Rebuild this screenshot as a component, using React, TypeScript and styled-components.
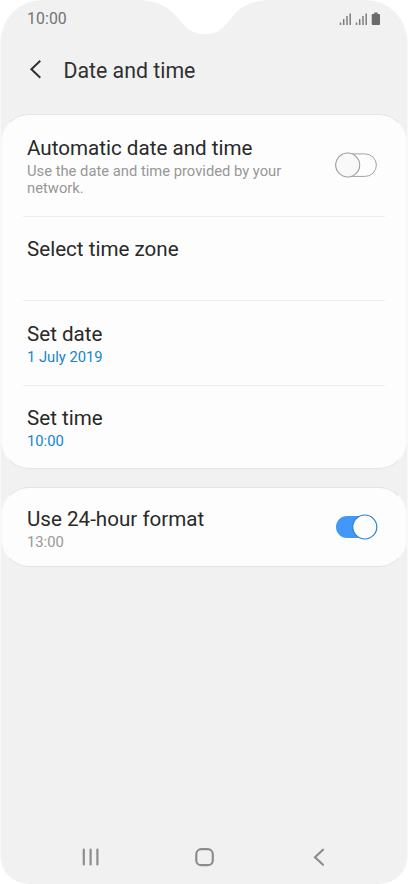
import React from "react";
import styled, { createGlobalStyle } from "styled-components";

const GlobalStyle = createGlobalStyle`
  * { box-sizing: border-box; }
  body { margin: 0; background: #fff; font-family: Roboto, "Liberation Sans", sans-serif; }
`;

const Phone = styled.main`
  position: relative;
  width: 408px;
  height: 884px;
  display: flex;
  flex-direction: column;
  overflow: hidden;
  background: #f1f1f1;
  border: solid #f9f9f9;
  border-width: 0 1px;
  border-radius: 42px 42px 28px 28px;
`;

const Notch = styled.svg`
  position: absolute;
  top: 0;
  left: 141px;
  width: 125px;
  height: 36px;
`;

const StatusBar = styled.header`
  flex: none;
  height: 38px;
  padding: 0 25px 0 26px;
  display: flex;
  justify-content: space-between;
  color: #737373;
`;

const Clock = styled.span`
  font-size: 15.8px;
  line-height: 18px;
  padding-top: 10px;
  letter-spacing: 0.1px;
`;

const StatusIcons = styled.svg`
  width: 43px;
  height: 14px;
  margin-top: 12px;
`;

const TitleBar = styled.div`
  flex: none;
  height: 76px;
  padding: 0 26px;
  display: flex;
  align-items: flex-start;
`;

const BackIcon = styled.svg`
  width: 16px;
  height: 22px;
  margin-top: 20px;
`;

const Title = styled.h1`
  margin: 20px 0 0 20.5px;
  color: #303030;
  font-size: 21.3px;
  font-weight: 400;
  line-height: 26px;
`;

const Card = styled.section`
  flex: none;
  margin-bottom: 18px;
  padding: 0 21px;
  background: #fdfdfd;
  border: 1px solid #e4e4e4;
  border-left-color: #f7f7f7;
  border-right-color: #f7f7f7;
  border-radius: 28px;
`;

const Row = styled.div<{ $height: number; $top: number }>`
  height: ${(p) => p.$height}px;
  padding: ${(p) => p.$top}px 8px 0 4px;
  display: flex;
  justify-content: space-between;

  & + & { border-top: 1px solid #eeeeee; }
`;

const Label = styled.h2`
  margin: 0;
  color: #292929;
  font-size: 20.6px;
  font-weight: 400;
  line-height: 24px;
  white-space: nowrap;
`;

const Detail = styled.p<{ $accent?: boolean }>`
  width: 270px;
  margin: 3px 0 0;
  color: ${(p) => (p.$accent ? "#1683cf" : "#979797")};
  font-size: 14.75px;
  line-height: 17px;
`;

const Toggle = styled.svg<{ $offset: number }>`
  flex: none;
  width: 44px;
  height: 28px;
  margin: ${(p) => p.$offset}px -1px 0 0;
`;

const NavBar = styled.nav`
  flex: none;
  height: 54px;
  margin-top: auto;
  padding: 15px 75px 0 78px;
  display: flex;
  justify-content: space-between;
`;

const NavIcon = styled.svg`
  width: 24px;
  height: 24px;
  fill: none;
  stroke: #8d8d8d;
  stroke-width: 2.2;
  stroke-linecap: round;
`;

const Switch = ({ on, offset }: { on?: boolean; offset: number }) => (
  <Toggle $offset={offset} viewBox="0 0 44 28" role="switch" aria-checked={!!on}>
    {on ? (
      <>
        <rect x="2" y="3" width="41" height="22" rx="11" fill="#4297fb" />
        <circle cx="30.8" cy="14" r="12" fill="#fdfdfd" stroke="#2781cd" strokeWidth="1.1" />
      </>
    ) : (
      <>
        <rect x="2" y="2.9" width="40.4" height="22.5" rx="11.25" fill="#fdfdfd" stroke="#a3a3a3" />
        <circle cx="13.7" cy="14" r="12" fill="#f9f9f9" stroke="#a0a0a0" strokeWidth="1.1" />
      </>
    )}
  </Toggle>
);

export default function App() {
  return (
    <>
      <GlobalStyle />
      <Phone>
        <StatusBar>
          <Clock>10:00</Clock>
          <StatusIcons viewBox="0 0 43 14">
            <g stroke="#7c7c7c" strokeWidth="1.5">
              <path d="M1.5 13v-2.5M4.7 13V7M8 13V4M11.2 13V1.5" />
              <path d="M17.5 13v-2.5M20.7 13V7M24 13V4M27.2 13V1.5" />
            </g>
            <path d="M35.2 .5h3.400v1.600h1.400q1 0 1 1V12q0 1-1 1h-6.300q-1 0-1-1V3.100q0-1 1-1h1.500z" fill="#6b6b6b" />
          </StatusIcons>
        </StatusBar>
        <Notch viewBox="142 0 125 36">
          <path d="M142 0C159 2 168 7 177 17C185 26 189 34 204.5 34C220 34 224 27 232 17C240 7 249 2 267 0Z" fill="#fff" />
        </Notch>
        <TitleBar>
          <BackIcon viewBox="0 0 16 22" fill="none" stroke="#303030" strokeWidth="2">
            <path d="M13.3 2.800L4.400 11.300L13.300 19.800" />
          </BackIcon>
          <Title>Date and time</Title>
        </TitleBar>
        <Card>
          <Row $height={101} $top={21}>
            <div>
              <Label>Automatic date and time</Label>
              <Detail>Use the date and time provided by your network.</Detail>
            </div>
            <Switch offset={15} />
          </Row>
          <Row $height={84} $top={20}>
            <Label>Select time zone</Label>
          </Row>
          <Row $height={85} $top={21}>
            <div>
              <Label>Set date</Label>
              <Detail $accent>1 July 2019</Detail>
            </div>
          </Row>
          <Row $height={83} $top={20}>
            <div>
              <Label>Set time</Label>
              <Detail $accent>10:00</Detail>
            </div>
          </Row>
        </Card>
        <Card>
          <Row $height={78} $top={19}>
            <div>
              <Label>Use 24-hour format</Label>
              <Detail>13:00</Detail>
            </div>
            <Switch on offset={6} />
          </Row>
        </Card>
        <NavBar>
          <NavIcon viewBox="0 0 24 24"><path d="M4.800 4.500v15M11.600 4.500v15M18.400 4.500v15" /></NavIcon>
          <NavIcon viewBox="0 0 24 24"><rect x="2.300" y="4.200" width="16.500" height="16" rx="5" /></NavIcon>
          <NavIcon viewBox="0 0 24 24"><path d="M15 4.700L7 12.200L15 19.700" /></NavIcon>
        </NavBar>
      </Phone>
    </>
  );
}
